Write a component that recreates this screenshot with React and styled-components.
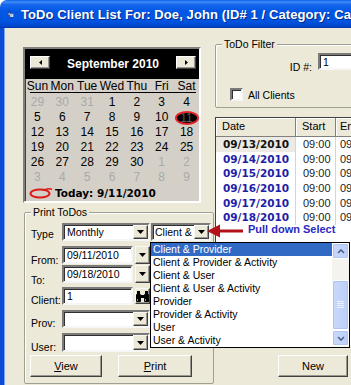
import React from 'react';
import styled, { createGlobalStyle } from 'styled-components';

const Global = createGlobalStyle`
  html, body { margin: 0; padding: 0; background: #fff; }
  body { font-family: "Liberation Sans", Arial, sans-serif; font-size: 10.5px; color: #000; }
  * { box-sizing: border-box; }
`;

const Window = styled.div`
  position: relative;
  width: 351px;
  height: 385px;
  overflow: hidden;
  background: #ECE9D8;
  display: flex;
  flex-direction: column;
  border-top-left-radius: 7px;
`;

const TitleBar = styled.div`
  height: 28px;
  flex: none;
  display: flex;
  align-items: center;
  gap: 7px;
  padding-left: 8px;
  background: linear-gradient(to bottom, #0A5EE8 0%, #3D8EF6 7%, #1767EC 16%, #0157E4 40%, #0054E0 75%, #0048D0 92%, #0037B0 100%);
  color: #fff;
  white-space: nowrap;
  overflow: hidden;
`;

const TitleText = styled.span`
  font: bold 13px "Liberation Sans", Arial, sans-serif;
  text-shadow: 1px 1px 0 #0A2A8A;
  letter-spacing: 0.1px;
`;

const Body = styled.div`
  flex: 1;
  min-height: 0;
  display: grid;
  grid-template-columns: 211px 136px;
  border-left: 4px solid #0B4BD8;
  box-shadow: inset 1px 0 0 #7FA2F0;
`;

const LeftCol = styled.div`
  display: flex;
  flex-direction: column;
  padding: 19px 0 0 19px;
`;

const RightCol = styled.div`
  display: flex;
  flex-direction: column;
  padding-top: 16px;
  min-width: 0;
`;

/* ---------- Calendar ---------- */
const Calendar = styled.div`
  width: 178px;
  height: 156px;
  background: #D4D0C8;
  border: 2px solid;
  border-color: #808080 #FFFFFF #FFFFFF #808080;
  box-shadow: inset 1px 1px 0 #404040;
  display: flex;
  flex-direction: column;
  font-family: "Liberation Sans", Arial, sans-serif;
  font-size: 12px;
`;

const CalHeader = styled.div`
  height: 30px;
  flex: none;
  background: #000;
  display: flex;
  align-items: center;
  justify-content: space-between;
  padding: 0 3px 4px 5px;
`;

const CalNavBtn = styled.div`
  width: 20px;
  height: 13px;
  background: #ECE9D8;
  border: 1px solid;
  border-color: #FFFFFF #404040 #404040 #FFFFFF;
  box-shadow: inset -1px -1px 0 #9A9890;
  display: flex;
  align-items: center;
  justify-content: center;
`;

const MonthTitle = styled.span`
  color: #fff;
  font: bold 12px "Liberation Sans", Arial, sans-serif;
  padding-top: 3px;
`;

const WeekRow = styled.div`
  display: grid;
  grid-template-columns: repeat(7, 1fr);
  height: ${p => p.$h || 15}px;
  align-items: center;
  flex: none;
`;

const DayName = styled.span`
  text-align: center;
  line-height: 14px;
`;

const Divider = styled.div`
  height: 1px;
  background: #000;
  margin: 0 3px 2px 5px;
  flex: none;
`;

const Day = styled.span`
  text-align: center;
  line-height: 15px;
  color: ${p => (p.$other ? '#A9A9A9' : '#000')};
  display: flex;
  justify-content: center;
`;

const SelectedDay = styled.span`
  display: inline-block;
  width: 24px;
  height: 14px;
  border-radius: 50%;
  background: #000;
  border: 2px solid #E4262A;
  color: #5A5A5A;
  line-height: 10px;
  text-align: center;
`;

const TodayRow = styled.div`
  height: 15px;
  display: flex;
  align-items: center;
  gap: 2px;
  padding-left: 4px;
  flex: none;
`;

const TodayText = styled.span`
  font: bold 10.5px "DejaVu Sans", Verdana, sans-serif;
`;

/* ---------- Group boxes ---------- */
const GroupBox = styled.div`
  position: relative;
  width: ${p => p.$w}px;
  height: ${p => p.$h}px;
  margin: ${p => p.$mt || 0}px 0 0 ${p => p.$ml || 0}px;
  border: 1px solid #A09F94;
  box-shadow: inset 1px 1px 0 #FFFFFF;
  border-radius: 2px;
  flex: none;
  padding: ${p => p.$pad};
  display: flex;
  flex-direction: column;
`;

const GroupTitle = styled.span`
  position: absolute;
  top: -7px;
  left: 6px;
  padding: 0 2px;
  background: #ECE9D8;
  line-height: 13px;
  font-size: 10.5px;
`;

/* ---------- Form rows ---------- */
const FormRow = styled.div`
  display: flex;
  align-items: flex-end;
  height: ${p => p.$h || 18}px;
  margin-top: ${p => p.$mt || 0}px;
  flex: none;
`;

const Label = styled.span`
  width: ${p => p.$w || 31}px;
  flex: none;
  line-height: 13px;
  margin-bottom: ${p => p.$drop || 0}px;
  text-align: ${p => p.$align || 'left'};
`;

const Field = styled.div`
  width: ${p => p.$w}px;
  height: ${p => p.$h || 18}px;
  margin-left: ${p => p.$ml || 0}px;
  flex: none;
  background: #fff;
  border: 2px solid;
  border-color: #7A7A7A #F6F6F6 #F6F6F6 #7A7A7A;
  box-shadow: inset 1px 1px 0 #303030;
  display: flex;
  align-items: center;
  overflow: hidden;
`;

const FieldText = styled.span`
  flex: 1;
  min-width: 0;
  padding: 0 0 0 ${p => p.$pl ?? 3}px;
  white-space: nowrap;
  overflow: hidden;
  line-height: 14px;
  font-size: 10.5px;
`;

const SmallBtn = styled.div`
  flex: none;
  width: ${p => p.$w || 15}px;
  height: ${p => p.$h || 14}px;
  margin-left: ${p => p.$ml || 0}px;
  background: #ECE9D8;
  border: 1px solid;
  border-color: #F8F7F2 #404040 #404040 #F8F7F2;
  box-shadow: inset -1px -1px 0 #9A9890;
  display: flex;
  align-items: center;
  justify-content: center;
  align-self: ${p => (p.$stretch ? 'stretch' : 'center')};
`;

const ButtonRow = styled.div`
  display: flex;
  gap: ${p => p.$gap || 0}px;
  margin: ${p => p.$mt || 0}px 0 0 ${p => p.$ml || 0}px;
  flex: none;
`;

const PushButton = styled.button`
  width: ${p => p.$w}px;
  height: 22px;
  background: #ECE9D8;
  border: 1px solid;
  border-color: #FFFFFF #404040 #404040 #FFFFFF;
  box-shadow: inset -1px -1px 0 #9A9890;
  font: 11px "Liberation Sans", Arial, sans-serif;
  color: #000;
  padding: 0;
  u { text-decoration: underline; }
`;

const CheckRow = styled.div`
  display: flex;
  align-items: center;
  gap: 5px;
  margin: 18px 0 0 14px;
  height: 13px;
`;

const CheckBox = styled.span`
  width: 13px;
  height: 13px;
  flex: none;
  background: #fff;
  border: 2px solid;
  border-color: #7A7A7A #F6F6F6 #F6F6F6 #7A7A7A;
  box-shadow: inset 1px 1px 0 #303030;
`;

/* ---------- Data grid ---------- */
const Grid = styled.div`
  width: 160px;
  height: 228px;
  margin-top: 9px;
  flex: none;
  background: #fff;
  border-top: 1px solid #404040;
  border-left: 1px solid #404040;
  display: flex;
  flex-direction: column;
`;

const GridLine = styled.div`
  display: grid;
  grid-template-columns: 80px 40px 1fr;
  height: ${p => p.$h}px;
  flex: none;
`;

const HeadCell = styled.div`
  background: #ECE9D8;
  border-right: 1px solid #808080;
  border-bottom: 1px solid #808080;
  box-shadow: inset 1px 1px 0 #fff;
  padding-left: ${p => p.$pl || 6}px;
  line-height: 17px;
  font-size: 11px;
  white-space: nowrap;
  overflow: hidden;
`;

const Cell = styled.div`
  border-right: 1px solid #D8D6CC;
  background: ${p => (p.$shade ? '#ECEAE2' : '#fff')};
  padding-left: ${p => p.$pl || 6}px;
  display: flex;
  align-items: center;
  white-space: nowrap;
  overflow: hidden;
  font-size: 11px;
  color: #222;
`;

const DateText = styled.span`
  font: bold 10.5px "DejaVu Sans", Verdana, sans-serif;
  color: ${p => (p.$current ? '#111' : '#1E1EA6')};
`;

/* ---------- Overlays ---------- */
const Annotation = styled.div`
  position: absolute;
  left: 207px;
  top: 224px;
  display: flex;
  align-items: center;
  gap: 4px;
`;

const AnnotationText = styled.span`
  font: bold 11px "Liberation Sans", Arial, sans-serif;
  line-height: 12px;
  color: #2A2ABF;
  margin-top: -4px;
`;

const DropList = styled.div`
  position: absolute;
  left: 150px;
  top: 242px;
  width: 200px;
  height: 106px;
  background: #fff;
  border: 1px solid #000;
  display: flex;
`;

const ListItems = styled.div`
  flex: 1;
  display: flex;
  flex-direction: column;
`;

const ListItem = styled.div`
  height: 13px;
  line-height: 13px;
  padding-left: 2px;
  font-size: 10.5px;
  white-space: nowrap;
  background: ${p => (p.$sel ? '#316AC5' : 'transparent')};
  color: ${p => (p.$sel ? '#fff' : '#000')};
`;

const ScrollBar = styled.div`
  width: 17px;
  flex: none;
  background: #F4F3EE;
  display: flex;
  flex-direction: column;
`;

const ScrollBtn = styled.div`
  height: ${p => p.$h}px;
  margin-top: ${p => p.$mt || 0}px;
  flex: none;
  border: 1px solid #fff;
  border-radius: 2px;
  background: linear-gradient(to right, #C9D8FC, #BCCEF8);
  box-shadow: inset 0 0 0 1px #B2C5F2;
  display: flex;
  align-items: center;
  justify-content: center;
`;

/* ---------- Icons ---------- */
const AppIcon = () => (
  <svg width="14" height="13" viewBox="0 0 14 13">
    <rect x="0.5" y="0.5" width="8" height="8" fill="#DDE6F6" stroke="#0B1F5C" />
    <rect x="0.5" y="0.5" width="8" height="2" fill="#1B3C9C" />
    <rect x="4.5" y="3.5" width="9" height="9" fill="#fff" stroke="#0B1F5C" />
    <rect x="4.5" y="3.5" width="9" height="2.5" fill="#2A58D0" />
    <rect x="6" y="7.5" width="6" height="1" fill="#7A8AB0" />
    <rect x="6" y="9.5" width="4" height="1" fill="#7A8AB0" />
  </svg>
);

const DownTri = () => (
  <svg width="7" height="4" viewBox="0 0 7 4"><path d="M0 0h7L3.5 4z" fill="#000" /></svg>
);

const SideTri = ({ dir }) => (
  <svg width="3" height="5" viewBox="0 0 3 5">
    {dir === 'left' ? <path d="M3 0v5L0 2.5z" fill="#000" /> : <path d="M0 0v5l3-2.5z" fill="#000" />}
  </svg>
);

const Binoculars = () => (
  <svg width="13" height="11" viewBox="0 0 13 11">
    <rect x="1" y="0" width="3" height="4" fill="#000" />
    <rect x="9" y="0" width="3" height="4" fill="#000" />
    <rect x="0" y="3" width="5" height="8" rx="1" fill="#000" />
    <rect x="8" y="3" width="5" height="8" rx="1" fill="#000" />
    <rect x="4" y="4" width="5" height="3" fill="#000" />
    <rect x="1" y="8" width="1" height="2" fill="#888" />
    <rect x="9" y="8" width="1" height="2" fill="#888" />
  </svg>
);

const TodayMark = () => (
  <svg width="24" height="12" viewBox="0 0 24 12">
    <ellipse cx="11" cy="6.5" rx="9.5" ry="4" fill="none" stroke="#E01818" strokeWidth="2" />
    <path d="M14 3.5 C18 1.5 21 1.5 23 2.5" fill="none" stroke="#E01818" strokeWidth="1.6" />
  </svg>
);

const RedArrow = () => (
  <svg width="37" height="14" viewBox="0 0 37 14">
    <path d="M0 7 L13 0.5 L13 5.5 L36 5.5 L36 8.5 L13 8.5 L13 13.5 Z" fill="#B3121A" />
  </svg>
);

const Chevron = ({ up }) => (
  <svg width="8" height="5" viewBox="0 0 8 5">
    <path d={up ? 'M1 4 L4 1 L7 4' : 'M1 1 L4 4 L7 1'} fill="none" stroke="#4D6185" strokeWidth="1.6" />
  </svg>
);

const Grip = () => (
  <svg width="7" height="8" viewBox="0 0 7 8">
    {[0.5, 2.5, 4.5, 6.5].map(y => (
      <path key={y} d={`M0 ${y} H7`} stroke="#EEF3FE" strokeWidth="1" />
    ))}
  </svg>
);

/* ---------- Data ---------- */
const dayNames = ['Sun', 'Mon', 'Tue', 'Wed', 'Thu', 'Fri', 'Sat'];
const weeks = [
  [[29, 1], [30, 1], [31, 1], [1], [2], [3], [4]],
  [[5], [6], [7], [8], [9], [10], [11, 0, 1]],
  [[12], [13], [14], [15], [16], [17], [18]],
  [[19], [20], [21], [22], [23], [24], [25]],
  [[26], [27], [28], [29], [30], [1, 1], [2, 1]],
  [[3, 1], [4, 1], [5, 1], [6, 1], [7, 1], [8, 1], [9, 1]],
];
const rows = ['09/13/2010', '09/14/2010', '09/15/2010', '09/16/2010', '09/17/2010', '09/18/2010'];
const listItems = [
  'Client & Provider',
  'Client & Provider & Activity',
  'Client & User',
  'Client & User & Activity',
  'Provider',
  'Provider & Activity',
  'User',
  'User & Activity',
];

export default function App() {
  return (
    <>
      <Global />
      <Window>
        <TitleBar>
          <AppIcon />
          <TitleText>ToDo Client List For: Doe, John (ID# 1 / Category: Ca</TitleText>
        </TitleBar>
        <Body>
          <LeftCol>
            <Calendar>
              <CalHeader>
                <CalNavBtn><SideTri dir="left" /></CalNavBtn>
                <MonthTitle>September 2010</MonthTitle>
                <CalNavBtn><SideTri dir="right" /></CalNavBtn>
              </CalHeader>
              <WeekRow $h={13}>
                {dayNames.map(d => <DayName key={d}>{d}</DayName>)}
              </WeekRow>
              <Divider />
              {weeks.map((w, i) => (
                <WeekRow key={i}>
                  {w.map(([n, other, sel], j) => (
                    <Day key={j} $other={!!other}>
                      {sel ? <SelectedDay>{n}</SelectedDay> : n}
                    </Day>
                  ))}
                </WeekRow>
              ))}
              <TodayRow>
                <TodayMark />
                <TodayText>Today: 9/11/2010</TodayText>
              </TodayRow>
            </Calendar>

            <GroupBox $w={190} $h={172} $ml={1} $mt={9} $pad="10px 0 0 6px">
              <GroupTitle>Print ToDos</GroupTitle>
              <FormRow>
                <Label>Type</Label>
                <Field $w={88}>
                  <FieldText>Monthly</FieldText>
                  <SmallBtn><DownTri /></SmallBtn>
                </Field>
                <Field $w={60} $ml={1}>
                  <FieldText $pl={2}>Client &amp; Provider</FieldText>
                  <SmallBtn><DownTri /></SmallBtn>
                </Field>
              </FormRow>
              <FormRow $mt={5}>
                <Label $drop={-3}>From:</Label>
                <Field $w={71}><FieldText>09/11/2010</FieldText></Field>
                <SmallBtn $h={18} $ml={2} $stretch><DownTri /></SmallBtn>
              </FormRow>
              <FormRow $mt={1}>
                <Label $drop={-4}>To:</Label>
                <Field $w={71}><FieldText>09/18/2010</FieldText></Field>
                <SmallBtn $h={18} $ml={2} $stretch><DownTri /></SmallBtn>
              </FormRow>
              <FormRow $mt={4}>
                <Label $drop={-2}>Client:</Label>
                <Field $w={71}><FieldText>1</FieldText></Field>
                <SmallBtn $h={16} $ml={2}><Binoculars /></SmallBtn>
              </FormRow>
              <FormRow $mt={5}>
                <Label $drop={-2}>Prov:</Label>
                <Field $w={88}>
                  <FieldText />
                  <SmallBtn><DownTri /></SmallBtn>
                </Field>
              </FormRow>
              <FormRow $mt={5} $h={19}>
                <Label $drop={-2}>User:</Label>
                <Field $w={88} $h={19}>
                  <FieldText />
                  <SmallBtn $h={15}><DownTri /></SmallBtn>
                </Field>
              </FormRow>
              <ButtonRow $mt={3} $ml={-1} $gap={16}>
                <PushButton $w={72}><u>V</u>iew</PushButton>
                <PushButton $w={74}><u>P</u>rint</PushButton>
              </ButtonRow>
            </GroupBox>
          </LeftCol>

          <RightCol>
            <GroupBox $w={160} $h={64} $pad="8px 0 0 0">
              <GroupTitle>ToDo Filter</GroupTitle>
              <FormRow $h={17}>
                <Label $w={96} $align="right" $drop={-4}>ID #:</Label>
                <Field $w={60} $h={17} $ml={6}><FieldText>1</FieldText></Field>
              </FormRow>
              <CheckRow>
                <CheckBox />
                <span>All Clients</span>
              </CheckRow>
            </GroupBox>

            <Grid>
              <GridLine $h={19}>
                <HeadCell $pl={6}>Date</HeadCell>
                <HeadCell $pl={6}>Start</HeadCell>
                <HeadCell $pl={4}>End</HeadCell>
              </GridLine>
              {rows.map((d, i) => (
                <GridLine key={d} $h={14.6}>
                  <Cell $shade={i === 0} $pl={7}><DateText $current={i === 0}>{d}</DateText></Cell>
                  <Cell $pl={7}>09:00</Cell>
                  <Cell $pl={4}>09:30</Cell>
                </GridLine>
              ))}
            </Grid>

            <ButtonRow $mt={10} $ml={63}>
              <PushButton $w={70}>New</PushButton>
            </ButtonRow>
          </RightCol>
        </Body>

        <Annotation>
          <RedArrow />
          <AnnotationText>Pull down Select</AnnotationText>
        </Annotation>

        <DropList>
          <ListItems>
            {listItems.map((t, i) => (
              <ListItem key={t} $sel={i === 0}>{t}</ListItem>
            ))}
          </ListItems>
          <ScrollBar>
            <ScrollBtn $h={16}><Chevron up /></ScrollBtn>
            <ScrollBtn $h={50} $mt={21}><Grip /></ScrollBtn>
            <ScrollBtn $h={16}><Chevron /></ScrollBtn>
          </ScrollBar>
        </DropList>
      </Window>
    </>
  );
}
